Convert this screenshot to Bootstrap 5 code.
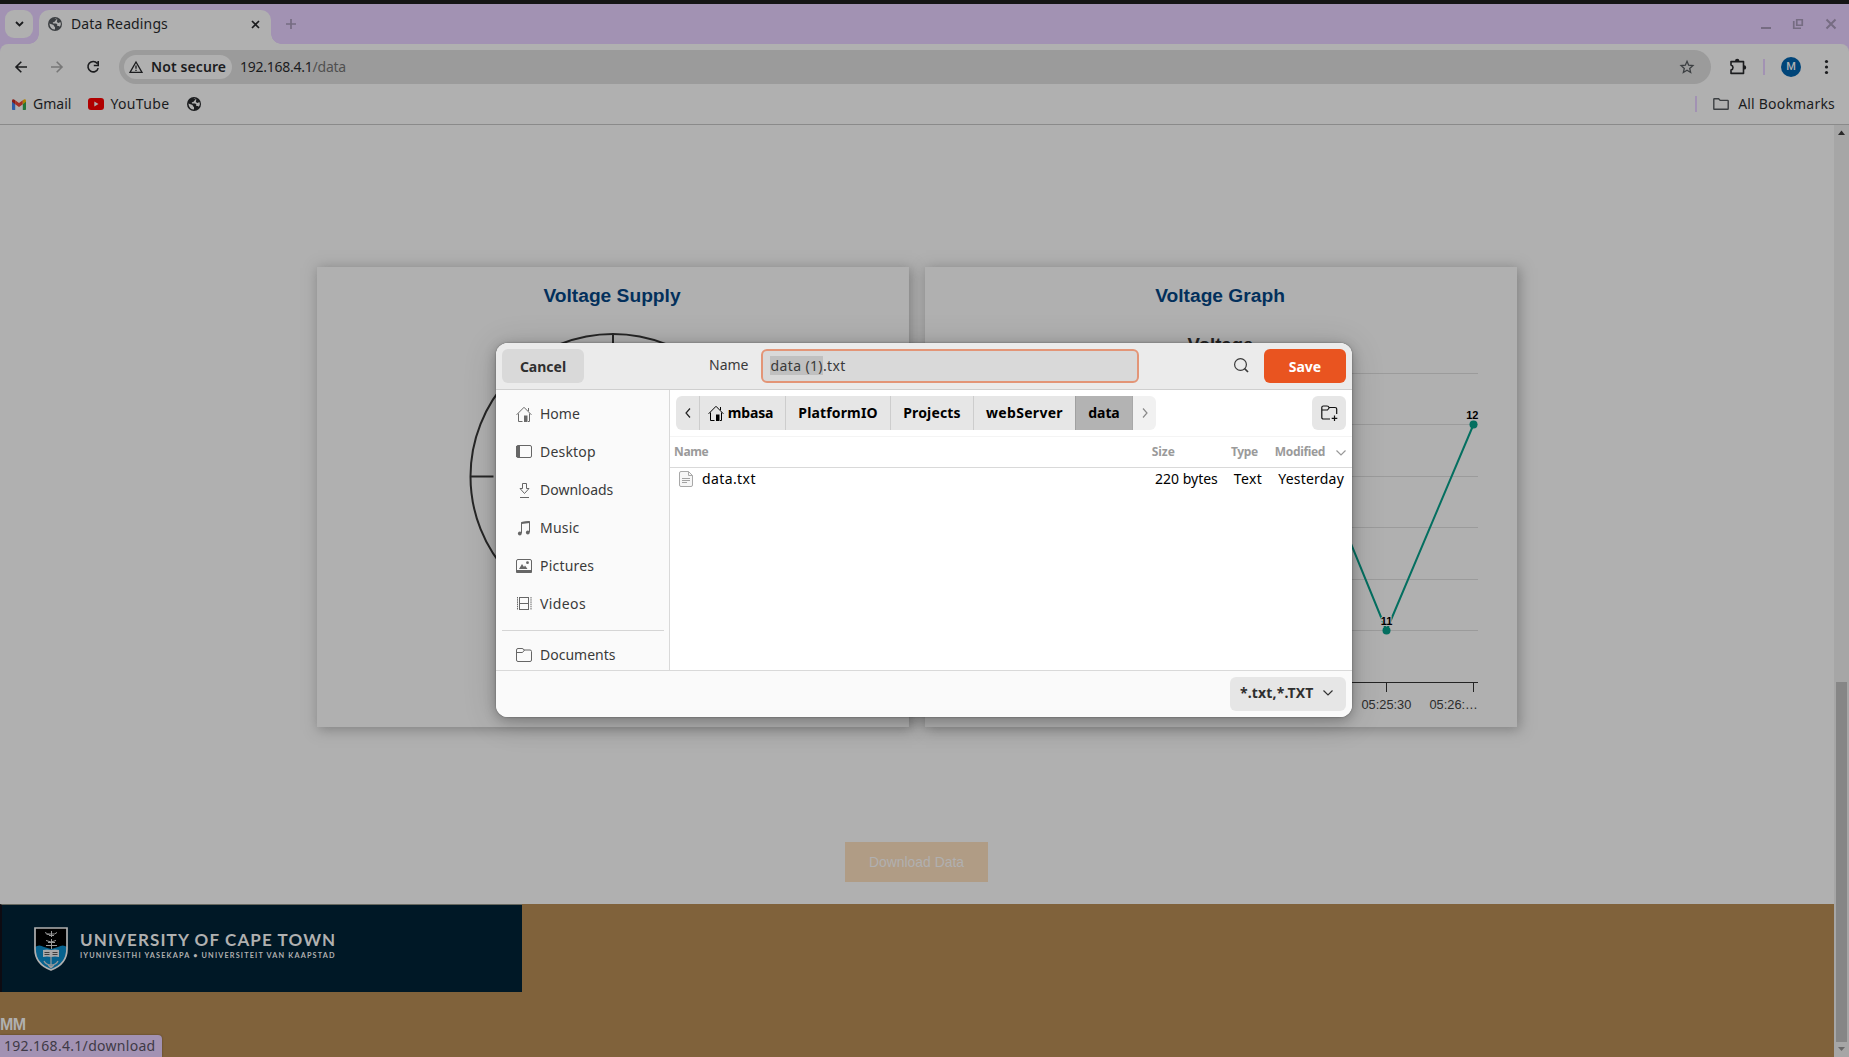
<!DOCTYPE html>
<html lang="en">
<head>
<meta charset="utf-8">
<title>Data Readings</title>
<link href="https://cdn.jsdelivr.net/npm/bootstrap@5.3.0/dist/css/bootstrap.min.css" rel="stylesheet">
<style>
  html, body { height: 1057px; overflow: hidden; }
  body { width: 1849px; background: #b0b0b0; font: 400 14px/20px "Noto Sans", sans-serif; color: #1b1c1e; white-space: nowrap; }
  svg { display: block; flex: none; overflow: visible; }
  .topline { height: 4px; background: #151515; }
  .tabstrip { height: 40px; background: #a292b3; padding-left: 5px; }
  .tab-search { width: 28px; height: 28px; margin-top: 6px; background: #b0b0b0; border-radius: 9px; }
  .browser-tab { width: 232px; height: 34px; margin: 6px 0 0 6px; padding: 0 11px 6px 9px; background: #b0b0b0; border-radius: 10px 10px 0 0; position: relative; }
  .browser-tab::before, .browser-tab::after { content: ""; position: absolute; bottom: 0; width: 10px; height: 10px; }
  .browser-tab::before { left: -10px; background: radial-gradient(circle at 0 0, transparent 9.5px, #b0b0b0 10px); }
  .browser-tab::after { right: -10px; background: radial-gradient(circle at 100% 0, transparent 9.5px, #b0b0b0 10px); }
  .tab-title { margin-left: 9px; letter-spacing: .13px; }
  .tab-plus { margin: 15px 0 0 15px; }
  .win-controls { padding: 15px 13px 0 0; gap: 22px; color: #766c82; }
  .tools-wrap { background: #a292b3; }
  .toolbar-main { height: 46px; background: #b0b0b0; border-radius: 8px 8px 0 0; padding: 0 17px 0 15px; }
  .omnibox { width: 1592px; height: 34px; border-radius: 17px; background: #9b9b9b; margin-left: 20px; padding: 0 17px 0 5px; }
  .site-chip { width: 108px; height: 24px; border-radius: 12px; background: #b0b0b0; padding-left: 5px; font-weight: 600; letter-spacing: .1px; }
  .url-text { margin-left: 8px; letter-spacing: -.25px; }
  .url-text span { color: #505050; }
  .vsep { width: 2px; height: 16px; background: #a292b3; }
  .avatar-dot { width: 20px; height: 20px; border-radius: 50%; background: #004579; color: #b0b0b0; font: 500 11px/20px "Roboto", sans-serif; text-align: center; }
  .bookmarks { height: 34px; padding: 0 14px 6px 12px; }
  .rule { height: 1px; background: #8a8a8a; }
  .viewport { height: 932px; }
  .page { width: 1834px; font-family: "Liberation Sans", sans-serif; }
  .cards { padding-top: 142px; gap: 16px; margin-left: 0; }
  .panel { width: 592px; height: 460px; background: #b0b0b0; box-shadow: 2px 2px 12px 1px rgba(85,85,85,.5); padding-top: 18px; }
  .panel h2 { font: 700 19.2px/22px "Liberation Sans", sans-serif; color: #03305c; text-align: center; margin: 0 0 2px; padding-right: 2px; }
  .dl-btn { width: 143px; height: 40px; margin: 115px 0 22px 845px; background: #b09c85; color: #b0b0b0; border: 0; border-radius: 0; font: 400 13.9px/40px "Liberation Sans", sans-serif; padding: 0; display: block; }
  .page-footer { height: 153px; background: #80623b; }
  .uct { width: 522px; height: 88px; background: #001826; border-left: 2px solid #0d0b12; border-top: 1px solid #66675f; padding: 22px 0 0 32px; gap: 12px; color: #b0b0b0; font-family: "Lato", sans-serif; }
  .uct-big { font-size: 17px; line-height: 18px; font-weight: 700; letter-spacing: 1.12px; margin-top: 4px; }
  .uct-small { font-size: 7.3px; line-height: 12px; font-weight: 700; letter-spacing: 1.17px; margin-top: 1px; }
  .mm { font: 700 16px/18px "Liberation Sans", sans-serif; letter-spacing: -.7px; color: #b0b0b0; margin-top: 24px; }
  .sbar { width: 15px; background: #a6a6a6; padding-top: 5px; }
  .sbar .thumb { width: 11px; height: 360px; margin: 547px 2px 0; background: #868686; }
  .status { position: absolute; left: 0; bottom: 0; width: 162px; height: 22px; background: #a292b3; border-radius: 0 4px 0 0; padding: 1px 0 0 4px; color: #3f3a46; letter-spacing: .3px; box-shadow: 0 0 2px rgba(0,0,0,.4); }

  .dialog-win, .dialog-shadow { position: absolute; left: 496px; top: 343px; width: 856px; height: 374px; border-radius: 12px; }
  .dialog-win { overflow: hidden; background: #fff; color: #3a3a3a; }
  .dialog-shadow { box-shadow: 0 3px 12px 1px rgba(0,0,0,.22), 0 4px 34px rgba(0,0,0,.16), 0 0 2px rgba(0,0,0,.4); }
  .head { height: 47px; background: #ebebeb; border-bottom: 1px solid #cfcfcf; padding: 6px 6px 0; }
  .gbtn { width: 82px; height: 34px; line-height: 33px; border-radius: 6px; background: #d9d9d9; font-size: 14px; font-weight: 700; text-align: center; border: 0; padding: 0; color: #2f2f2f; }
  .gbtn.save { background: #e95420; color: #fff; }
  .name-label { margin-left: 125px; line-height: 32px; }
  .name-field { width: 378px; height: 34px; border: 2px solid #e39577; border-radius: 6px; background: #d9d9d9; padding: 0 0 1px 7px; line-height: 16px; margin-left: 13px; letter-spacing: .38px; }
  .name-field mark { background: #c0c0c0; color: inherit; padding: 0; }
  .side { width: 174px; height: 280px; background: #fafafa; border-right: 1px solid #d9d9d9; padding-top: 6px; overflow: hidden; }
  .side-item { height: 38px; padding-left: 20px; gap: 8px; color: #3a3a3a; padding-bottom: 3px; }
  .side hr { margin: 6px 5px 6px 6px; border: 0; height: 1px; background: #d5d5d5; opacity: 1; }
  .pathbar { height: 47px; padding: 6px 6px 0 6px; border-bottom: 1px solid #f4f4f4; font-weight: 700; color: #000; }
  .seg { height: 34px; background: #e6e6e6; border-left: 1px solid #cdcdcd; display: flex; align-items: center; justify-content: center; padding-bottom: 1px; letter-spacing: .15px; }
  .seg.first { border: 0; border-radius: 6px 0 0 6px; width: 23px; }
  .seg.on { background: #b3b3b3; border-color: #a0a0a0; }
  .seg.last { background: #f1f1f1; border-radius: 0 6px 6px 0; border-color: #a8a8a8; width: 24px; }
  .newf { width: 34px; height: 34px; border-radius: 6px; background: #e6e6e6; }
  .cols { height: 31px; border-bottom: 1px solid #d9d9d9; font-size: 12px; font-weight: 700; color: #9a9a9a; padding: 0 6px 1px 4px; letter-spacing: -.35px; }
  .filerow { height: 24px; color: #000; padding: 0 8px 3px 9px; }
  .foot { height: 47px; background: #fafafa; border-top: 1px solid #d9d9d9; padding: 6px; }
  .filter { width: 116px; height: 34px; background: #e6e6e6; border-radius: 6px; font-weight: 700; color: #2f2f2f; padding: 0 13px 2px 10px; letter-spacing: .15px; }
  .f1 { letter-spacing: .2px; } .f2 { letter-spacing: .4px; }
</style>
</head>
<body class="position-relative">
<svg width="0" height="0" class="position-absolute">
  <symbol id="globe" viewBox="0 0 14 14"><circle cx="7" cy="7" r="7" fill="currentColor"/><path d="M1.4 6.400 4.200 7.600q1.900.2 1.800 1.600l1 .8V12.500Q2 12.400 1.400 6.400ZM6.200 1.500h2.200l-.3 1.300q.1.900-1.100.9L6.500 4.900 4.700 5.300 5.200 6.400H8.200l1.100 1.100-.1 1.400H11q.8.200.5 1.100Q13.700 7.200 12.300 4.900L10.600 5.900 9.100 5.200 8.800 3.900 9.600 2.600Z" fill="#b0b0b0"/></symbol>
  <symbol id="house" viewBox="0 0 16 16"><path d="M.6 8.800 8 1.300l7.400 7.500M2.500 7.500v8h4M13.500 7.500v8H12M12.500 2v3" fill="none" stroke="currentColor"/><path d="M8 9.500h3.500V16H8z" fill="currentColor"/></symbol>
</svg>

<header>
  <div class="topline"></div>
  <div class="tabstrip d-flex">
    <div class="tab-search d-flex align-items-center justify-content-center"><svg width="9" height="6" viewBox="0 0 9 6"><path d="M1 1l3.500 3.500L8 1" fill="none" stroke="#1b1c1e" stroke-width="1.800"/></svg></div>
    <div class="browser-tab d-flex align-items-center">
      <svg width="14" height="14" style="color:#3c3f42"><use href="#globe"/></svg>
      <span class="tab-title">Data Readings</span>
      <svg class="ms-auto" width="9" height="9" viewBox="0 0 9 9"><path d="M1 1l7 7M8 1L1 8" stroke="#1b1c1e" stroke-width="1.700"/></svg>
    </div>
    <svg class="tab-plus" width="10" height="10" viewBox="0 0 10 10"><path d="M5 0v10M0 5h10" stroke="#766c82" stroke-width="1.700"/></svg>
    <div class="win-controls d-flex ms-auto">
      <svg width="10" height="10" viewBox="0 0 10 10"><path d="M-1 9h10" stroke="currentColor" stroke-width="2"/></svg>
      <svg width="10" height="10" viewBox="0 0 10 10"><path d="M2.750.750h5.500v5.500h-5.500zM-.250 2v7.250H7" fill="none" stroke="currentColor" stroke-width="1.700"/></svg>
      <svg width="10" height="10" viewBox="0 0 10 10"><path d="M.5.5l9 9M9.500.5l-9 9" stroke="currentColor" stroke-width="2"/></svg>
    </div>
  </div>
  <div class="tools-wrap"><div class="toolbar-main d-flex align-items-center">
    <svg width="12" height="12" viewBox="0 0 12 12"><path d="M12 6H1M6.300.7L1 6l5.300 5.300" fill="none" stroke="#1b1c1e" stroke-width="1.600"/></svg>
    <svg class="ms-4" width="12" height="12" viewBox="0 0 12 12"><path d="M0 6h11M5.700.7L11 6l-5.300 5.300" fill="none" stroke="#777" stroke-width="1.600"/></svg>
    <svg class="ms-4" width="12" height="12" viewBox="0 0 12 12"><path d="M10.300 2.500A5.200 5.200 0 1 0 11.200 7.100M11.200 0v4.500H6.800" fill="none" stroke="#1b1c1e" stroke-width="1.600"/></svg>
    <div class="omnibox d-flex align-items-center">
      <div class="site-chip d-flex align-items-center"><svg width="14" height="12" viewBox="0 0 14 12"><path d="M7 1L13 11.300H1Z" fill="none" stroke="#1b1c1e" stroke-width="1.300"/><path d="M7 4.500v3.300M7 8.800V10" stroke="#1b1c1e" stroke-width="1.300"/></svg><span class="ms-1 ps-1">Not secure</span></div>
      <span class="url-text">192.168.4.1<span>/data</span></span>
      <svg class="ms-auto" width="14" height="14" viewBox="0 0 14 14"><path d="M7 1.300l1.650 3.900 4.250.4-3.200 2.800.95 4.100L7 10.300l-3.650 2.200.95-4.100-3.200-2.800 4.250-.4z" fill="none" stroke="#3c3f42" stroke-width="1.300"/></svg>
    </div>
    <svg style="margin-left:19px" width="16" height="16" viewBox="0 0 16 16"><path d="M1 2.600h12.500v11.800H1v-3.300q2-.6 2-2.600t-2-2.600z" fill="none" stroke="#1b1c1e" stroke-width="1.600" stroke-linejoin="round"/><path d="M5 2a2.200 2.200 0 0 1 4.400 0zM14 6.200a2.200 2.200 0 0 1 0 4.400z" fill="#1b1c1e"/></svg>
    <div class="vsep" style="margin-left:17px"></div>
    <div class="avatar-dot" style="margin-left:16px">M</div>
    <svg class="ms-auto me-1" width="3" height="14" viewBox="0 0 3 14" fill="#1b1c1e"><circle cx="1.500" cy="1.500" r="1.600"/><circle cx="1.500" cy="7" r="1.600"/><circle cx="1.500" cy="12.500" r="1.600"/></svg>
  </div></div>
  <div class="bookmarks d-flex align-items-center">
    <svg width="14" height="11" viewBox="0 0 14 11"><path d="M0 2v8.200q0 .8.800.8H3.200V4.500z" fill="#2e5da8"/><path d="M14 2v8.200q0 .8-.8.8H10.800V4.500z" fill="#247539"/><path d="M3.200 1.200L7 4.100l3.800-2.900v4L7 8 3.200 5.200z" fill="#a32f25"/><path d="M0 1.800Q.3-.8 3.200 1.200v4L0 2.800z" fill="#891a14"/><path d="M14 1.800Q13.700-.8 10.800 1.200v4L14 2.800z" fill="#ae8100"/></svg>
    <span style="margin-left:7px">Gmail</span>
    <svg style="margin-left:17px" width="16" height="12" viewBox="0 0 16 12"><rect width="16" height="12" rx="3" fill="#b00000"/><path d="M6.300 3.500v5L10.500 6z" fill="#b0b0b0"/></svg>
    <span style="margin-left:6px;letter-spacing:.35px">YouTube</span>
    <svg style="margin-left:18px" width="14" height="14"><use href="#globe"/></svg>
    <div class="vsep ms-auto"></div>
    <svg style="margin-left:16px" width="16" height="12" viewBox="0 0 16 12"><path d="M.8 1.300q0-.6.6-.6h4.200l1.600 1.700h7.400q.6 0 .6.600v7.700q0 .6-.6.600H1.400q-.6 0-.6-.6z" fill="none" stroke="#3c3f42" stroke-width="1.400"/></svg>
    <span class="f1" style="margin-left:9px">All Bookmarks</span>
  </div>
  <div class="rule"></div>
</header>

<main class="viewport d-flex">
  <div class="page">
    <div class="cards d-flex justify-content-center">
      <section class="panel">
        <h2>Voltage Supply</h2>
        <svg class="mx-auto" width="300" height="330" viewBox="462.500 309 300 330" fill="none" stroke="#262626" stroke-width="2"><circle cx="612.500" cy="476.500" r="142.500"/><path d="M612.500 334v23M470 476.500h23M755 476.500h-23"/></svg>
      </section>
      <section class="panel">
        <h2>Voltage Graph</h2>
        <svg width="592" height="418" viewBox="925 309 592 418" font-family="Liberation Sans, sans-serif">
          <text x="1220.500" y="351" text-anchor="middle" font-size="18.600" font-weight="700" fill="#232323">Voltage</text>
          <path d="M980 373.500h498M980 424.500h498M980 476.500h498M980 527.500h498M980 579.500h498M980 630.500h498" stroke="#9b9b9b" fill="none"/>
          <path d="M980 682.500h498M1386.500 682v10M1473.500 682v10" stroke="#232323" fill="none"/>
          <path d="M1299.500 418L1386.500 630.500L1473.500 424.500" stroke="#046f60" stroke-width="2" fill="none" stroke-linejoin="round"/>
          <circle cx="1386.500" cy="630.500" r="4" fill="#046f60"/><circle cx="1473.500" cy="424.500" r="4" fill="#046f60"/>
          <g font-size="11" font-weight="700" text-anchor="middle" stroke="#b0b0b0" stroke-width="2" paint-order="stroke"><text x="1472.300" y="419">12</text><text x="1386.500" y="625">11</text></g>
          <g font-size="12.800" fill="#2c2c2c"><text x="1361.500" y="709">05:25:30</text><text x="1429.500" y="709">05:26:…</text></g>
        </svg>
      </section>
    </div>
    <button class="btn dl-btn">Download Data</button>
    <footer class="page-footer">
      <div class="uct d-flex">
        <svg width="34" height="44" viewBox="0 0 34 44"><path d="M1 1h32v21Q33 37 17 43 1 37 1 22z" fill="#000"/><path d="M1 20Q5 17 10 20l7 2 7-2q5-3 9 0v3Q33 37 17 43 1 37 1 23z" fill="#07628e"/><path d="M1 1h32v21Q33 37 17 43 1 37 1 22z" fill="none" stroke="#b0b0b0" stroke-width="1.700"/><g fill="none" stroke="#9a9a9a"><path d="M11.500 5q0 3 4 2.500M13 7h7.500l2.500-1.500M15 8.500h5M17.500 4v6M12 13.500q5 3 10 0M14 15.500h7M12 18.500h11M17.500 12v10" stroke-width="1"/><path d="M17 30v11M10 34q2 4 7 4t7-4M14 38l3 3 3-3" stroke-width="1.200"/></g><path d="M9 23q4-1 8 0 4-1 8 0v7q-4-1-8 0-4-1-8 0z" fill="#a9a9a9"/><path d="M10.500 25.500h5M18.500 25.500h5M10.500 27.500h5M18.500 27.500h5" stroke="#333" stroke-width=".9"/></svg>
        <div><div class="uct-big">UNIVERSITY OF CAPE TOWN</div><div class="uct-small">IYUNIVESITHI YASEKAPA • UNIVERSITEIT VAN KAAPSTAD</div></div>
      </div>
      <div class="mm">MM</div>
    </footer>
  </div>
  <div class="sbar">
    <svg style="margin-left:4px" width="7" height="5" viewBox="0 0 7 5"><path d="M3.500 .5L7 5H0z" fill="#2a2a2a"/></svg>
    <div class="thumb"></div>
    <svg style="margin:5px 0 0 4px" width="7" height="4" viewBox="0 0 7 4"><path d="M0 0h7L3.500 4z" fill="#686868"/></svg>
  </div>
</main>
<div class="status">192.168.4.1/download</div>

<div class="dialog-shadow"></div>
<div class="dialog-win" role="dialog">
  <div class="head d-flex">
    <button class="gbtn">Cancel</button>
    <div class="name-label">Name</div>
    <div class="name-field d-flex align-items-center"><span><mark>data (1)</mark>.txt</span></div>
    <svg style="margin:9px 0 0 95px" width="15" height="15" viewBox="0 0 15 15" fill="none" stroke="#3a3a3a"><circle cx="6.500" cy="6.500" r="5.900" stroke-width="1.200"/><path d="M10.500 10.500l3.500 3.500" stroke-width="1.700"/></svg>
    <button class="gbtn save ms-auto">Save</button>
  </div>
  <div class="d-flex">
    <nav class="side">
      <div class="side-item d-flex align-items-center"><svg width="16" height="16" style="color:#6a6a6a"><use href="#house"/></svg>Home</div>
      <div class="side-item d-flex align-items-center f1"><svg width="16" height="13" viewBox="0 0 16 13"><rect x=".5" y=".5" width="15" height="12" rx="1.500" fill="none" stroke="#666"/><path d="M0 1h4v11H0z" fill="#666"/></svg>Desktop</div>
      <div class="side-item d-flex align-items-center"><svg width="16" height="16" viewBox="0 0 16 16" fill="none" stroke="#666"><path d="M6.500 1.500h4v5h2.500L8.500 11.500 4 6.500h2.500zM4 15.500h9"/></svg>Downloads</div>
      <div class="side-item d-flex align-items-center f1"><svg width="16" height="16" viewBox="0 0 16 16" fill="none" stroke="#666"><path d="M5.500 13V2.500l8-1V12"/><path d="M5.500 3l8-1" stroke-width="2.200"/><circle cx="3.800" cy="13.500" r="1.900" fill="#666" stroke="none"/><circle cx="11.800" cy="12.500" r="1.900" fill="#666" stroke="none"/></svg>Music</div>
      <div class="side-item d-flex align-items-center f1"><svg width="16" height="14" viewBox="0 0 16 14"><rect x=".5" y=".5" width="15" height="13" rx="1.500" fill="none" stroke="#666"/><path d="M0 11h16v2q0 1-1 1H1q-1 0-1-1zM3 10l3-5 2 3 1-1.500L11.500 10z" fill="#666"/><circle cx="11.500" cy="3.700" r="1.400" fill="#666"/></svg>Pictures</div>
      <div class="side-item d-flex align-items-center f2"><svg width="16" height="13" viewBox="0 0 16 13" fill="none"><path d="M3.500.5h9M3.500 6.500h9M3.500 12.500h9M3.500 0v13M12.500 0v13" stroke="#666"/><path d="M1.500 0v13M15 0v13" stroke="#666" stroke-dasharray="1.500 .7"/></svg>Videos</div>
      <hr>
      <div class="side-item d-flex align-items-center"><svg width="16" height="14" viewBox="0 0 16 14" fill="none" stroke="#666"><path d="M.5 2q0-1.500 1.500-1.500h4q1.500 0 2 1.500h6q1.500 0 1.500 1.500v8.500q0 1.500-1.500 1.500H2Q.5 13.500.5 12zM.5 4.500h6L8.500 2"/></svg>Documents</div>
    </nav>
    <section class="flex-grow-1">
      <div class="pathbar d-flex">
        <div class="seg first"><svg width="6" height="10" viewBox="0 0 6 10"><path d="M5 .5L1 5l4 4.500" fill="none" stroke="#222" stroke-width="1.200"/></svg></div>
        <div class="seg" style="width:86px"><svg width="16" height="16" class="me-1"><use href="#house"/></svg><span class="pe-1" style="letter-spacing:-.2px">mbasa</span></div>
        <div class="seg" style="width:105px">PlatformIO</div>
        <div class="seg" style="width:83px">Projects</div>
        <div class="seg" style="width:102px;letter-spacing:.3px">webServer</div>
        <div class="seg on" style="width:57px;letter-spacing:-.1px">data</div>
        <div class="seg last"><svg width="6" height="10" viewBox="0 0 6 10"><path d="M1 .5L5 5 1 9.500" fill="none" stroke="#8a8a8a" stroke-width="1.200"/></svg></div>
        <div class="newf ms-auto d-flex align-items-center justify-content-center"><svg width="17" height="16" viewBox="0 0 17 16" fill="none" stroke="#111" stroke-width="1.200"><path d="M9 14H2.500Q.8 14 .8 12.500V2.500Q.8 1 2.500 1H6Q7.500 1 8 2.500h6q1.700 0 1.700 1.500v5M.8 5h5.700L8.500 2.500M13.500 10.500V16M10.700 13.300h5.600"/></svg></div>
      </div>
      <div class="cols d-flex align-items-center">
        <span>Name</span><span class="ms-auto" style="letter-spacing:0">Size</span><span style="margin-left:56px">Type</span><span style="margin-left:17px">Modified</span>
        <svg style="margin:2px 0 0 11px" width="10" height="6" viewBox="0 0 10 6"><path d="M.5.500L5 5l4.500-4.500" fill="none" stroke="#999" stroke-width="1.200"/></svg>
      </div>
      <div class="filerow d-flex align-items-center">
        <svg width="14" height="16" viewBox="0 0 14 16"><path d="M.5 2Q.5.500 2 .5h7.500l4 4V14q0 1.500-1.500 1.500H2Q.5 15.500.5 14z" fill="#f6f6f6" stroke="#a8a8a8"/><path d="M9.500.5v4h4" fill="none" stroke="#a8a8a8"/><path d="M3 7.500h8M3 9.500h8M3 11.500h5" stroke="#999" stroke-width=".9"/></svg>
        <span class="f2" style="margin-left:9px">data.txt</span>
        <span class="ms-auto">220 bytes</span><span class="f2" style="margin-left:16px">Text</span><span class="f1" style="margin-left:16px">Yesterday</span>
      </div>
    </section>
  </div>
  <div class="foot d-flex justify-content-end">
    <div class="filter d-flex align-items-center justify-content-between"><span>*.txt,*.TXT</span><svg width="10" height="6" viewBox="0 0 10 6"><path d="M.5.500L5 5l4.500-4.500" fill="none" stroke="#333" stroke-width="1.200"/></svg></div>
  </div>
</div>
<script src="https://cdn.jsdelivr.net/npm/bootstrap@5.3.0/dist/js/bootstrap.bundle.min.js"></script>
</body>
</html>
